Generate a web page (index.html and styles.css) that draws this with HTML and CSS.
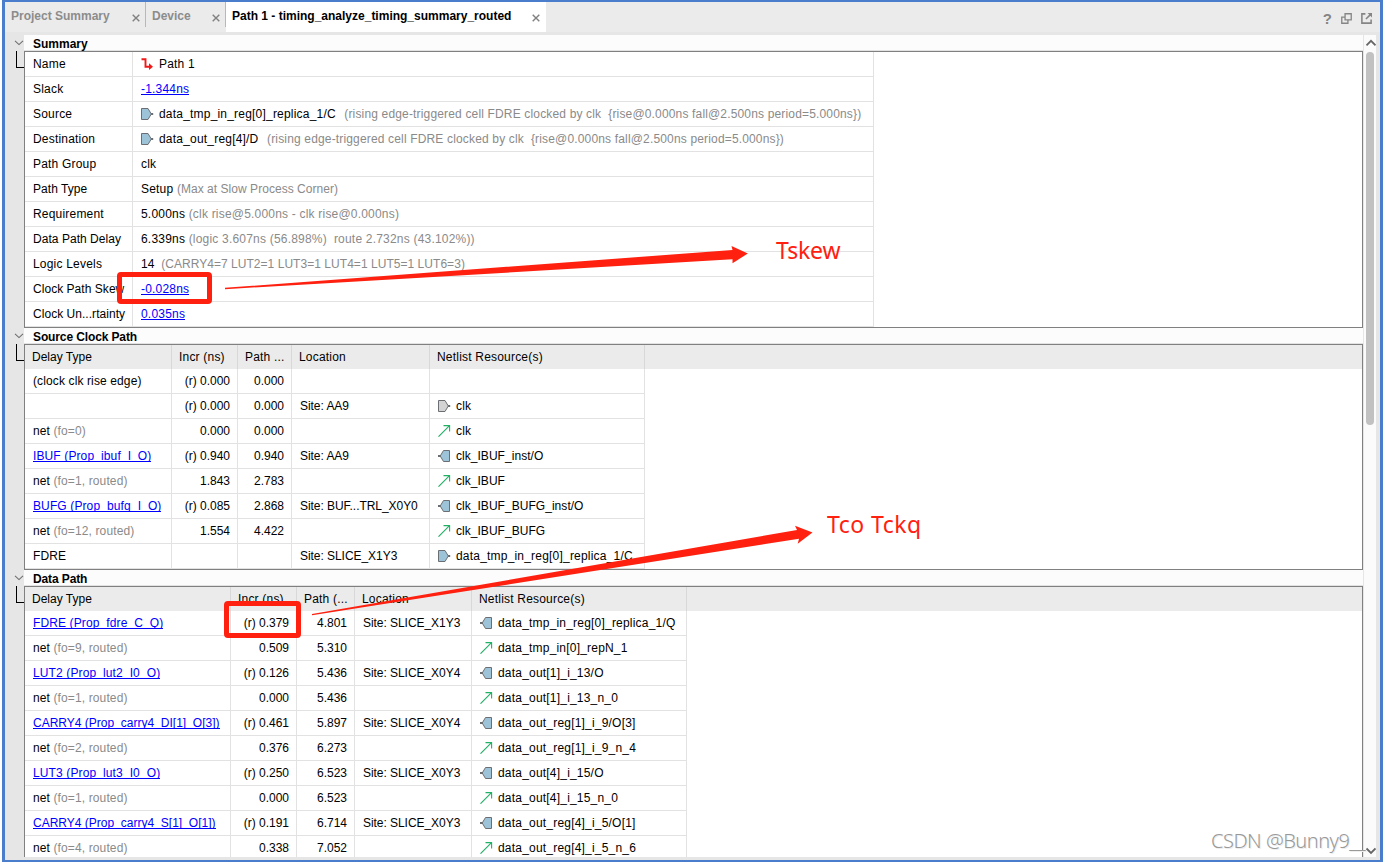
FILE: index.html
```html
<!DOCTYPE html>
<html lang="en">
<head>
    <meta charset="UTF-8">
    <title>Path 1 - timing_analyze_timing_summary_routed</title>
    <link rel="stylesheet" href="styles.css">
</head>
<body>
    <svg class="defs" width="0" height="0">
        <symbol id="chevron" viewBox="0 0 10 6"><path d="M1 0.8L5 4.6L9 0.8" fill="none" stroke="#6e6e6e" stroke-width="1.1"/></symbol>
        <symbol id="close" viewBox="0 0 8 8"><path d="M0.7 0.7L7.3 7.3M7.3 0.7L0.7 7.3" stroke="#808080" stroke-width="1.4"/></symbol>
        <symbol id="path" viewBox="0 0 13 12"><path d="M0.5 1.2H4.5V8.8H9.5" fill="none" stroke="#f01818" stroke-width="1.9"/><path d="M8 5.3L12 8.8L8 12Z" fill="#f01818"/></symbol>
        <symbol id="pin-in" viewBox="0 0 13 12"><path d="M0.5 0.5H7L10.3 6L7 11.5H0.5Z" fill="#9dc3d8" stroke="#6b6f73"/><path d="M10 6H12.2" stroke="#6b6f73" stroke-width="2"/></symbol>
        <symbol id="port" viewBox="0 0 13 12"><path d="M0.5 0.5H7L10.3 6L7 11.5H0.5Z" fill="#d3d3d3" stroke="#6b6f73"/><path d="M10 6H12.2" stroke="#6b6f73" stroke-width="2"/></symbol>
        <symbol id="pin-out" viewBox="0 0 13 12"><path d="M11.5 0.5H5.5L2.2 6L5.5 11.5H11.5Z" fill="#9dc3d8" stroke="#6b6f73"/><path d="M0 6H2.5" stroke="#6b6f73" stroke-width="2"/></symbol>
        <symbol id="net" viewBox="0 0 13 12"><path d="M0.5 11.7L11.5 0.7M5.5 0.6H11.6V6.5" fill="none" stroke="#22b067" stroke-width="1.1"/></symbol>
    </svg>

    <div class="window">
        <div class="tabs">
            <div class="tab tab-project"><span>Project Summary</span><svg class="close"><use href="#close"/></svg></div>
            <div class="tab tab-device"><span>Device</span><svg class="close"><use href="#close"/></svg></div>
            <div class="tab active"><span>Path 1 - timing_analyze_timing_summary_routed</span><svg class="close"><use href="#close"/></svg></div>
            <div class="tools">
                <b>?</b>
                <svg width="11" height="11" viewBox="0 0 10 10"><path d="M3.7 0.7H9.3V6.3H3.7ZM3.5 3.7H0.7V9.3H6.3V6.5" fill="none" stroke="#858585" stroke-width="1.2"/></svg>
                <svg width="11" height="11" viewBox="0 0 10 10"><path d="M4 0.8H0.8V9.2H9.2V6M4.5 5.5L9 1" fill="none" stroke="#858585" stroke-width="1.4"/><path d="M6 0H10V4Z" fill="#858585"/></svg>
            </div>
        </div>

        <div class="content">
            <div class="report">
                <div class="section">
                    <div class="gutter"><svg class="chevron"><use href="#chevron"/></svg><div class="elbow"></div></div>
                    <div class="panel">
                        <h2>Summary</h2>
                        <div class="box">
                            <table class="summary">
                                <colgroup><col class="c-label"><col class="c-value"></colgroup>
                                <tr><td>Name</td><td><svg class="icon"><use href="#path"/></svg>Path 1</td></tr>
                                <tr><td>Slack</td><td><a>-1.344ns</a></td></tr>
                                <tr><td>Source</td><td><svg class="icon"><use href="#pin-in"/></svg>data_tmp_in_reg[0]_replica_1/C <i class="wide">(rising edge-triggered cell FDRE clocked by clk&nbsp; {rise@0.000ns fall@2.500ns period=5.000ns})</i></td></tr>
                                <tr><td>Destination</td><td><svg class="icon"><use href="#pin-in"/></svg>data_out_reg[4]/D <i class="wide">(rising edge-triggered cell FDRE clocked by clk&nbsp; {rise@0.000ns fall@2.500ns period=5.000ns})</i></td></tr>
                                <tr><td>Path Group</td><td>clk</td></tr>
                                <tr><td class="tight">Path Type</td><td>Setup <i class="tight">(Max at Slow Process Corner)</i></td></tr>
                                <tr><td>Requirement</td><td>5.000ns <i>(clk rise@5.000ns - clk rise@0.000ns)</i></td></tr>
                                <tr><td class="tight">Data Path Delay</td><td>6.339ns <i>(logic 3.607ns (56.898%)&nbsp; route 2.732ns (43.102%))</i></td></tr>
                                <tr><td>Logic Levels</td><td class="tight">14&nbsp; <i>(CARRY4=7 LUT2=1 LUT3=1 LUT4=1 LUT5=1 LUT6=3)</i></td></tr>
                                <tr><td class="tight">Clock Path Skew</td><td><a>-0.028ns</a></td></tr>
                                <tr><td class="tight">Clock Un...rtainty</td><td><a>0.035ns</a></td></tr>
                            </table>
                        </div>
                    </div>
                </div>

                <div class="section">
                    <div class="gutter"><svg class="chevron"><use href="#chevron"/></svg><div class="elbow"></div></div>
                    <div class="panel">
                        <h2 class="narrow">Source Clock Path</h2>
                        <div class="box">
                            <table class="delays source-clock">
                                <colgroup><col class="c-type"><col class="c-incr"><col class="c-path"><col class="c-loc"><col class="c-net"><col></colgroup>
                                <tr><th>Delay Type</th><th>Incr (ns)</th><th>Path ...</th><th>Location</th><th>Netlist Resource(s)</th><th></th></tr>
                                <tr><td>(clock clk rise edge)</td><td>(r) 0.000</td><td>0.000</td><td></td><td></td></tr>
                                <tr><td></td><td>(r) 0.000</td><td>0.000</td><td>Site: AA9</td><td><svg class="icon"><use href="#port"/></svg>clk</td></tr>
                                <tr><td>net <i>(fo=0)</i></td><td>0.000</td><td>0.000</td><td></td><td><svg class="icon"><use href="#net"/></svg>clk</td></tr>
                                <tr><td><a>IBUF (Prop_ibuf_I_O)</a></td><td>(r) 0.940</td><td>0.940</td><td>Site: AA9</td><td class="tight"><svg class="icon"><use href="#pin-out"/></svg>clk_IBUF_inst/O</td></tr>
                                <tr><td>net <i>(fo=1, routed)</i></td><td>1.843</td><td>2.783</td><td></td><td class="tight"><svg class="icon"><use href="#net"/></svg>clk_IBUF</td></tr>
                                <tr><td><a>BUFG (Prop_bufg_I_O)</a></td><td>(r) 0.085</td><td>2.868</td><td>Site: BUF...TRL_X0Y0</td><td class="tight"><svg class="icon"><use href="#pin-out"/></svg>clk_IBUF_BUFG_inst/O</td></tr>
                                <tr><td>net <i>(fo=12, routed)</i></td><td>1.554</td><td>4.422</td><td></td><td class="tight"><svg class="icon"><use href="#net"/></svg>clk_IBUF_BUFG</td></tr>
                                <tr><td class="tight">FDRE</td><td></td><td></td><td>Site: SLICE_X1Y3</td><td><svg class="icon"><use href="#pin-in"/></svg>data_tmp_in_reg[0]_replica_1/C</td></tr>
                            </table>
                        </div>
                    </div>
                </div>

                <div class="section">
                    <div class="gutter"><svg class="chevron"><use href="#chevron"/></svg><div class="elbow"></div></div>
                    <div class="panel">
                        <h2 class="narrow">Data Path</h2>
                        <div class="box">
                            <table class="delays data-path">
                                <colgroup><col class="c-type"><col class="c-incr"><col class="c-path"><col class="c-loc"><col class="c-net"><col></colgroup>
                                <tr><th>Delay Type</th><th>Incr (ns)</th><th>Path (...</th><th>Location</th><th>Netlist Resource(s)</th><th></th></tr>
                                <tr><td><a>FDRE (Prop_fdre_C_Q)</a></td><td>(r) 0.379</td><td>4.801</td><td>Site: SLICE_X1Y3</td><td><svg class="icon"><use href="#pin-out"/></svg>data_tmp_in_reg[0]_replica_1/Q</td></tr>
                                <tr><td>net <i>(fo=9, routed)</i></td><td>0.509</td><td>5.310</td><td></td><td><svg class="icon"><use href="#net"/></svg>data_tmp_in[0]_repN_1</td></tr>
                                <tr><td><a>LUT2 (Prop_lut2_I0_O)</a></td><td>(r) 0.126</td><td>5.436</td><td>Site: SLICE_X0Y4</td><td><svg class="icon"><use href="#pin-out"/></svg>data_out[1]_i_13/O</td></tr>
                                <tr><td>net <i>(fo=1, routed)</i></td><td>0.000</td><td>5.436</td><td></td><td><svg class="icon"><use href="#net"/></svg>data_out[1]_i_13_n_0</td></tr>
                                <tr><td><a class="tight">CARRY4 (Prop_carry4_DI[1]_O[3])</a></td><td>(r) 0.461</td><td>5.897</td><td>Site: SLICE_X0Y4</td><td><svg class="icon"><use href="#pin-out"/></svg>data_out_reg[1]_i_9/O[3]</td></tr>
                                <tr><td>net <i>(fo=2, routed)</i></td><td>0.376</td><td>6.273</td><td></td><td><svg class="icon"><use href="#net"/></svg>data_out_reg[1]_i_9_n_4</td></tr>
                                <tr><td><a>LUT3 (Prop_lut3_I0_O)</a></td><td>(r) 0.250</td><td>6.523</td><td>Site: SLICE_X0Y3</td><td><svg class="icon"><use href="#pin-out"/></svg>data_out[4]_i_15/O</td></tr>
                                <tr><td>net <i>(fo=1, routed)</i></td><td>0.000</td><td>6.523</td><td></td><td><svg class="icon"><use href="#net"/></svg>data_out[4]_i_15_n_0</td></tr>
                                <tr><td><a class="tight">CARRY4 (Prop_carry4_S[1]_O[1])</a></td><td>(r) 0.191</td><td>6.714</td><td>Site: SLICE_X0Y3</td><td><svg class="icon"><use href="#pin-out"/></svg>data_out_reg[4]_i_5/O[1]</td></tr>
                                <tr><td>net <i>(fo=4, routed)</i></td><td>0.338</td><td>7.052</td><td></td><td><svg class="icon"><use href="#net"/></svg>data_out_reg[4]_i_5_n_6</td></tr>
                            </table>
                        </div>
                    </div>
                </div>
            </div>

            <div class="scrollbar">
                <svg width="12" height="17" viewBox="0 0 12 17"><path d="M2.5 10.3L7 5.8L11.5 10.3" fill="none" stroke="#666" stroke-width="1.8"/></svg>
                <div class="thumb"></div>
                <svg class="down" width="12" height="17" viewBox="0 0 12 17"><path d="M2.5 8.5L7 13L11.5 8.5" fill="none" stroke="#666" stroke-width="1.8"/></svg>
            </div>
        </div>
    </div>

    <!-- annotations -->
    <svg class="arrows" width="1385" height="862" viewBox="0 0 1385 862">
        <path d="M225 287.8L732.5 250L731.5 246L747.8 253.5L732.5 263.3L732.5 259.3L225 289.2Z"/>
        <path d="M312 614L797 530L795 525.7L812.5 532.5L797.7 543.7L799 538.7L312 615.3Z"/>
    </svg>
    <div class="mark mark-skew"></div>
    <div class="mark mark-incr"></div>
    <div class="note note-skew">Tskew</div>
    <div class="note note-tco">Tco Tckq</div>
    <div class="watermark">CSDN @Bunny9__</div>
</body>
</html>
```

FILE: styles.css
```css
body {
    margin: 0;
    position: relative;
    width: 1385px;
    height: 862px;
    overflow: hidden;
    background: #fff;
    color: #000;
    font: 12px "Liberation Sans", Arial, sans-serif;
}
.defs {
    position: absolute;
}
.window {
    box-sizing: border-box;
    width: 1381px;
    height: 862px;
    margin-left: 2px;
    border: solid #4a7dcb;
    border-width: 2px 3px;
    background: #e6e6e6;
    display: flex;
    flex-direction: column;
}

/* tabs */
.tabs {
    display: flex;
    height: 30px;
    margin-bottom: 3px;
    background: #ebebeb;
    flex: none;
}
.tab {
    box-sizing: border-box;
    display: flex;
    justify-content: space-between;
    padding: 0 5px 0 6px;
    font-weight: bold;
    line-height: 28px;
    color: #8c8c8c;
    white-space: nowrap;
}
.tab-project {
    width: 141px;
}
.tab-device {
    width: 80px;
}
.tab-project, .tab-device {
    height: 25px;
    border-right: 1px solid #b8b8b8;
}
.tab.active {
    width: 320px;
    padding-right: 6px;
    background: #fff;
    color: #000;
}
.close {
    width: 8px;
    height: 8px;
    margin-top: 12px;
}
.tools {
    margin-left: auto;
    padding: 2px 8px 0 0;
    display: flex;
    align-items: center;
    gap: 9px;
    color: #858585;
}
.tools b {
    font-size: 15px;
}

/* report */
.content {
    display: flex;
    height: 822px;
}
.report {
    width: 1358px;
    overflow: hidden;
}
.section {
    display: flex;
}
.gutter {
    width: 19px;
    flex: none;
}
.chevron {
    display: block;
    width: 10px;
    height: 6px;
    margin: 5px 0 5px 9px;
}
.elbow {
    margin-left: 11px;
    height: 16px;
    border: solid #000;
    border-width: 0 0 1px 1px;
}
.panel {
    flex: 1;
}
h2 {
    box-sizing: border-box;
    height: 16px;
    margin: 0;
    padding-left: 9px;
    background: #fcfcfc;
    border-bottom: 1px solid #e2e2e2;
    font-size: 12px;
    line-height: 18px;
}
.narrow {
    letter-spacing: -0.12px;
}
.box {
    border: 1px solid #808080;
    background: #fff;
}
table {
    table-layout: fixed;
    border-collapse: separate;
    border-spacing: 0;
}
td, th {
    box-sizing: border-box;
    height: 25px;
    padding: 0 0 0 8px;
    border: solid #e2e2e2;
    border-width: 0 1px 1px 0;
    text-align: left;
    font-weight: normal;
    line-height: 14px;
    letter-spacing: 0.2px;
    white-space: nowrap;
}
th {
    height: 24px;
    padding-left: 7px;
    background: #ebebeb;
    border-bottom: 0;
    border-color: #d8d8d8;
}
th:last-child {
    border-right: 0;
}
th:first-child {
    letter-spacing: 0;
}
.summary {
    width: 849px;
}
.c-label {
    width: 108px;
}
.c-value {
    width: 741px;
}
.delays {
    width: 1337px;
}
.source-clock .c-type {
    width: 147px;
}
.data-path .c-type {
    width: 206px;
}
.c-incr {
    width: 66px;
}
.source-clock .c-path {
    width: 54px;
}
.data-path .c-path {
    width: 58px;
}
.source-clock .c-loc {
    width: 138px;
}
.data-path .c-loc {
    width: 117px;
}
.c-net {
    width: 215px;
}
.delays td:first-child {
    letter-spacing: 0.12px;
}
.delays td:nth-child(2),
.delays td:nth-child(3) {
    text-align: right;
    padding-right: 7px;
    letter-spacing: 0;
}
.delays td:nth-child(4) {
    letter-spacing: -0.05px;
}
td.tight, .tight {
    letter-spacing: 0.04px;
}
i {
    font-style: normal;
    color: #8a8a8a;
}
.summary .wide {
    margin-left: 5px;
    letter-spacing: 0.16px;
}
a {
    display: inline-block;
    height: 12px;
    overflow: hidden;
    border-bottom: 1px solid #0000ff;
    color: #0000ff;
    line-height: 14px;
    vertical-align: top;
}
.delays a.tight {
    letter-spacing: 0;
}
.icon {
    width: 13px;
    height: 12px;
    margin-right: 5px;
    vertical-align: -2px;
}

/* scrollbar */
.scrollbar {
    width: 12px;
    margin-left: 1px;
    background: #fbfbfb;
    display: flex;
    flex-direction: column;
}
.thumb {
    width: 8px;
    height: 373px;
    margin-left: 2px;
    border-radius: 4px;
    background: #c1c1c1;
}
.down {
    margin-top: auto;
}

/* annotations */
.arrows {
    position: absolute;
    left: 0;
    top: 0;
    fill: #ff2010;
}
.mark {
    position: absolute;
    box-sizing: border-box;
    border: 5px solid #ff2010;
    border-radius: 4px;
}
.mark-skew {
    left: 117px;
    top: 272px;
    width: 95px;
    height: 32px;
}
.mark-incr {
    left: 224px;
    top: 601px;
    width: 77px;
    height: 37px;
}
.note {
    position: absolute;
    color: #ff2010;
    font: 23px/28px "Noto Sans", sans-serif;
    white-space: nowrap;
}
.note-skew {
    left: 776px;
    top: 236px;
    letter-spacing: -0.2px;
}
.note-tco {
    left: 827px;
    top: 510px;
    letter-spacing: 0.5px;
}
.watermark {
    position: absolute;
    left: 1211px;
    top: 827px;
    color: #999;
    font: 300 20px/28px "Noto Sans", sans-serif;
    letter-spacing: -0.5px;
    text-shadow: 1px 1px 0 #eee;
    white-space: nowrap;
}
```
